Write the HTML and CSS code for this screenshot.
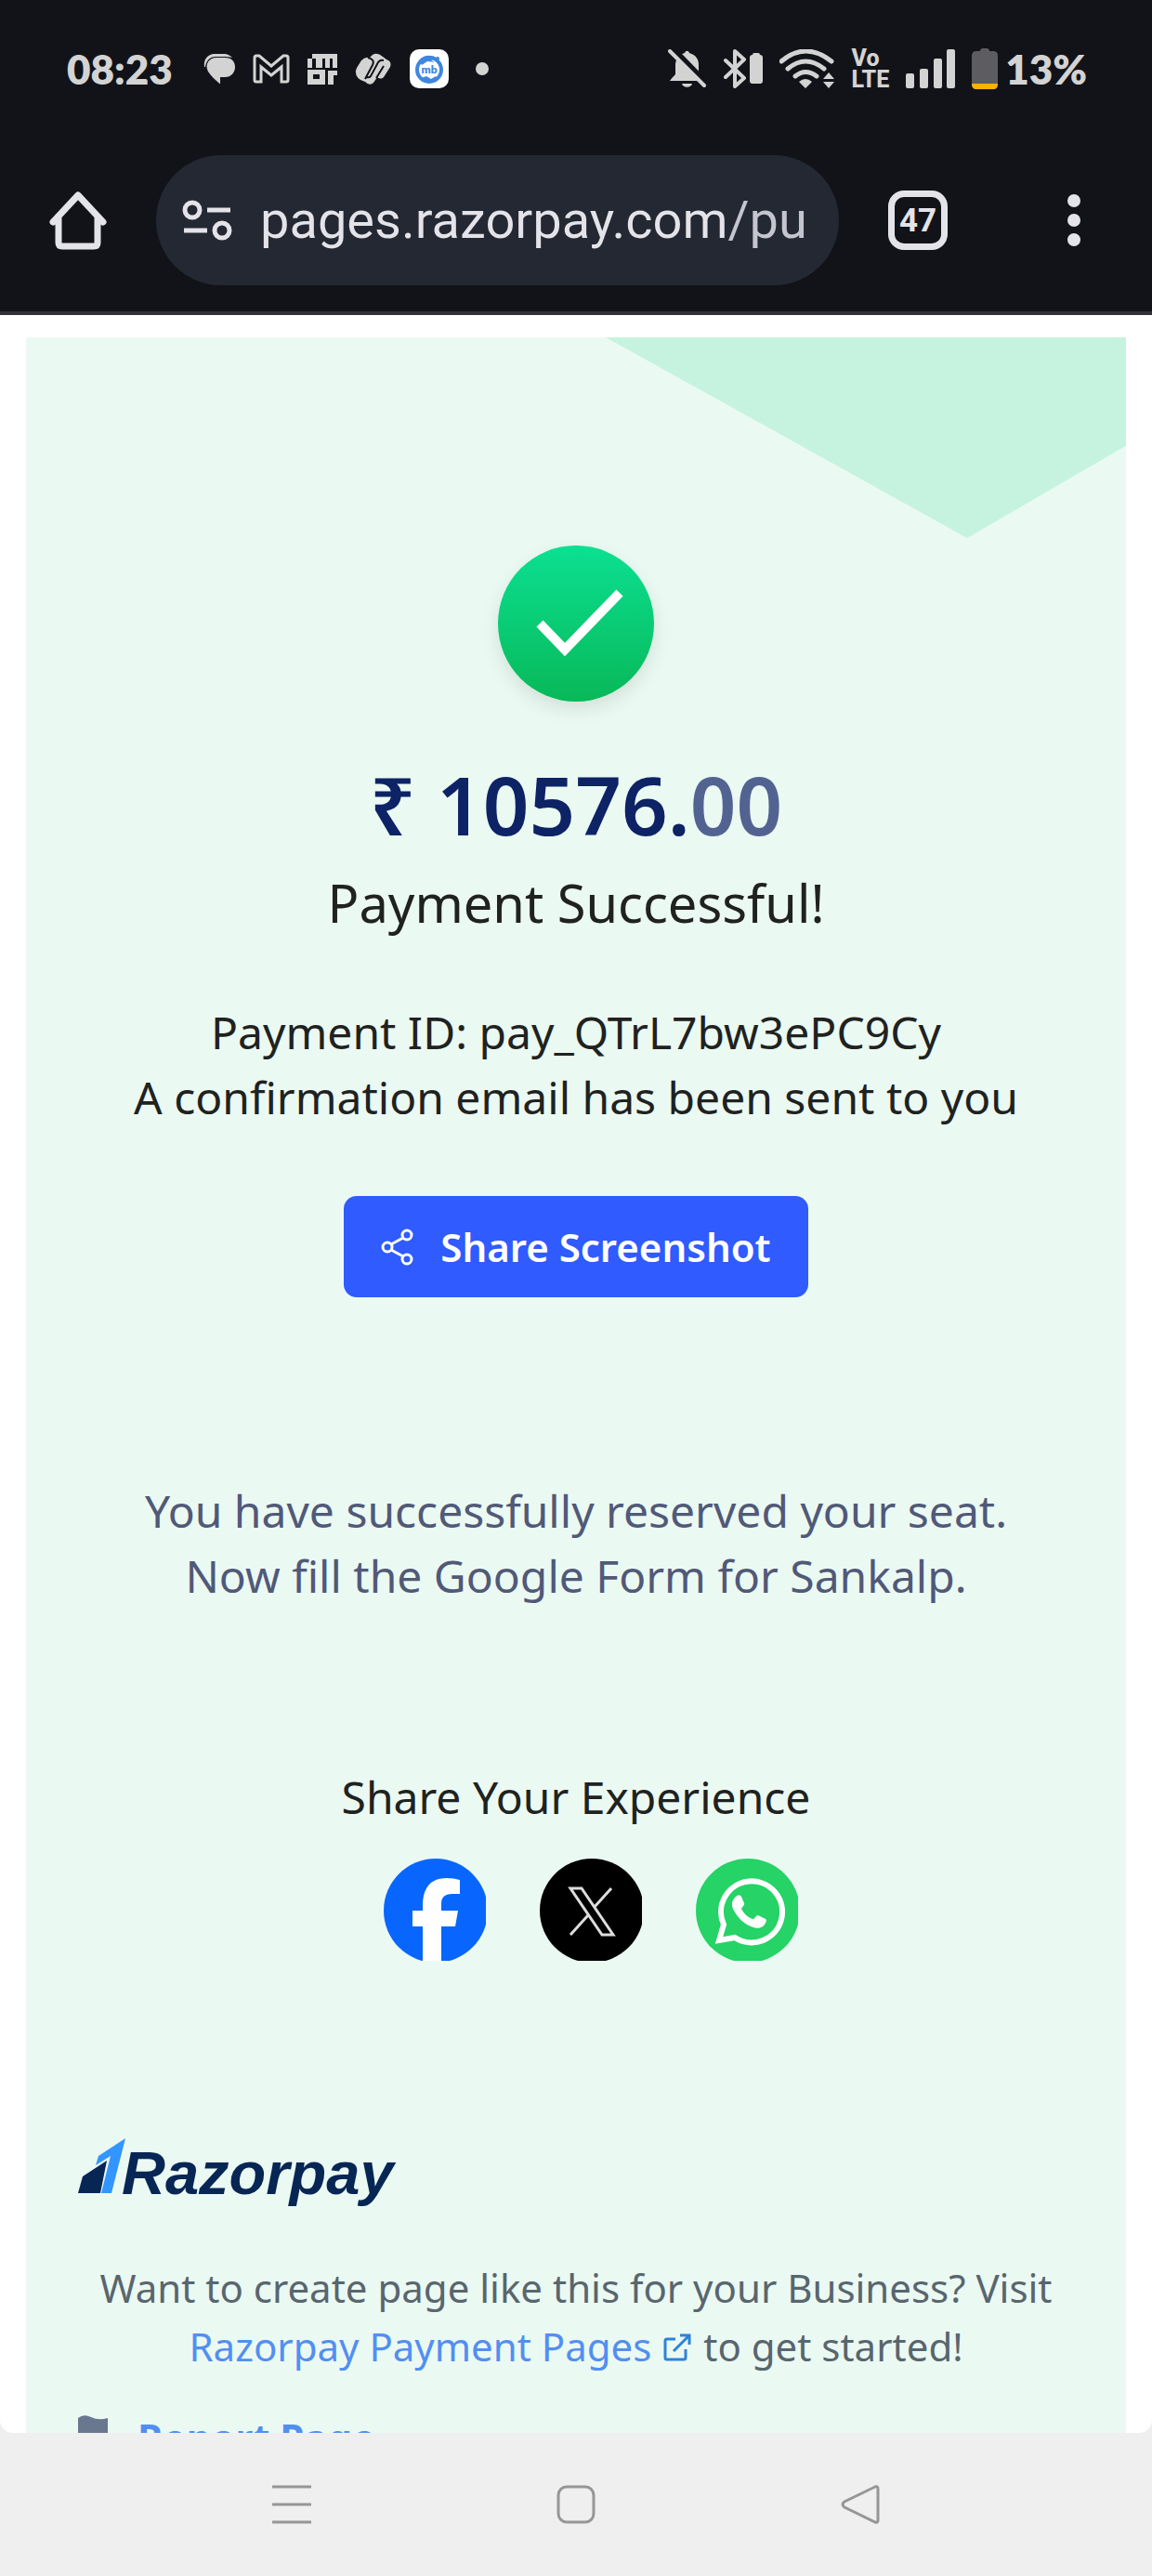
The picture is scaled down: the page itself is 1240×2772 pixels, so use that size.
FILE: index.html
```
<!DOCTYPE html>
<html lang="en">
<head>
    <meta charset="UTF-8">
    <meta name="viewport" content="width=device-width, initial-scale=1.0">
    <link rel="stylesheet" href="styles.css">
    <title>Payment Successful</title>
</head>
<body>
    <div class="status-bar">
        <div class="status-left">
            <span class="clock">08:23</span>
            <svg class="icon-chat" width="34" height="34" viewBox="0 0 34 34">
                <path d="M1 15C0 7 4 2 11 1h11c4 0 7 2 9 4-3-1-6-1-10-1h-8C7 4 3 8 2 15z"/>
                <path d="M14 5h9c7 0 11 4 11 10s-4 11-11 11h-5v7.500C13 29 8 25 5 20 1 12 6 5 14 5z"/>
            </svg>
            <svg class="icon-mail" width="40" height="32" viewBox="0 0 40 32">
                <path d="M2 4q0-2 2-2h3l13 11L33 2h3q2 0 2 2v24q0 2-2 2h-5V14L20 23 9 14v16H4q-2 0-2-2z"/>
            </svg>
            <svg width="32" height="34" viewBox="0 0 32 34">
                <path d="M5 1h27v15h-5V6h-3v10h-5V6h-3v10h-7V6H5zM0 6h5v10H0zM22 19h10v5h-4v10h-6z"/>
                <path d="M0 18h19v16H0zm6 5v5h7v-5z" fill-rule="evenodd"/>
            </svg>
            <svg width="40" height="34" viewBox="0 0 40 34">
                <path d="M2 16L7 8q4-4 9-3 6-8 14-1l4 3q6 2 4 8l-7 11q-3 3-7 0l-4 6q-4 4-9-1Q0 28 1 19z"/>
                <path class="wave" d="M14 5q8 2 5 8l-8 15M31 8q-5-1-7 4l-7 13q-2 2-4 1M31 14l-8 13"/>
            </svg>
            <svg class="icon-mb" width="42" height="42" viewBox="0 0 42 42">
                <rect width="42" height="42" rx="10" fill="#fff"/>
                <circle cx="21" cy="22" r="13" fill="none" stroke="#3f86df" stroke-width="4"/>
                <path d="M10 12c6-7 15-6 19-2l-6 2 4 2-8-1-6 4zM12 31l6-2 5 3 5-3 2 3c-6 6-14 5-18-1z" fill="#3f86df"/>
                <circle cx="30" cy="10" r="2" fill="#3f86df"/>
                <text x="21" y="26" text-anchor="middle">mb</text>
            </svg>
            <span class="dot"></span>
        </div>
        <div class="status-right">
            <svg width="42" height="42" viewBox="0 0 42 42">
                <path d="M2 34q2-3 6-7V16c1-8 6-11 10-12 1-3 4-3 5 0 7 2 10 7 10 12v8l5 8v2z"/>
                <path d="M15 37h11c-1 5-10 5-11 0z"/>
                <path d="M6 0l37 38" stroke="#121318" stroke-width="6"/>
                <path d="M2 2l37 37" stroke="#d3d3d3" stroke-width="4" stroke-linecap="round"/>
            </svg>
            <svg width="42" height="42" viewBox="0 0 42 42">
                <path d="M2 12l20 19-10 9V2l10 9L2 30" fill="none" stroke="#d3d3d3" stroke-width="4" stroke-linejoin="round" stroke-linecap="round"/>
                <path d="M31 6q0-2 2-2h4q2 0 2 2 3 0 3 3v25q0 3-3 3h-8q-3 0-3-3V9q0-3 3-3z"/>
            </svg>
            <svg width="60" height="42" viewBox="0 0 60 42">
                <path d="M2 13Q28-9 56 13M9 21Q28 5 48 21M17 29q11-9 23 0" fill="none" stroke="#d3d3d3" stroke-width="5" stroke-linecap="round"/>
                <path d="M28 42l-7-7q7-6 14 0zM53 25l6 7H47zM53 42l6-7H47z"/>
            </svg>
            <span class="volte">Vo<br>LTE</span>
            <svg width="53" height="42" viewBox="0 0 53 42">
                <rect x="0" y="26" width="9" height="16" rx="2"/>
                <rect x="15" y="21" width="9" height="21" rx="2"/>
                <rect x="30" y="10" width="9" height="32" rx="2"/>
                <rect x="44" y="0" width="9" height="42" rx="2"/>
            </svg>
            <span class="battery">
                <svg width="28" height="44" viewBox="0 0 28 44">
                    <path d="M9 3q0-3 3-3h4q3 0 3 3h4q5 0 5 5v31q0 5-5 5H5q-5 0-5-5V8q0-5 5-5z" fill="#5d5d61"/>
                    <path d="M0 38h28q0 6-5 6H5q-5 0-5-6z" fill="#ffb100"/>
                </svg>
                13%
            </span>
        </div>
    </div>

    <div class="toolbar">
        <a class="home" href="#" aria-label="Home">
            <svg width="62" height="64" viewBox="0 0 62 64">
                <path d="M4 34L31 5l27 29M10 30v26q0 4 4 4h34q4 0 4-4V30" fill="none" stroke="#e3e3e9" stroke-width="7" stroke-linecap="round" stroke-linejoin="round"/>
            </svg>
        </a>
        <div class="address">
            <svg width="54" height="44" viewBox="0 0 54 44">
                <g fill="none" stroke="#e3e3e9" stroke-width="5">
                    <circle cx="11" cy="11" r="8"/>
                    <circle cx="43" cy="33" r="8"/>
                    <path d="M27 11h25M2 33h25"/>
                </g>
            </svg>
            <input class="url" type="text" aria-label="Address" value="pages.razorpay.com/pu">
        </div>
        <button class="tabs" type="button">47</button>
        <button class="more" type="button" aria-label="More"><i></i><i></i><i></i></button>
    </div>

    <div class="viewport">
        <div class="card">
            <div class="corner"></div>
            <div class="check">
                <svg width="168" height="168" viewBox="0 0 168 168">
                    <path d="M45 84l27 28 59-61" fill="none" stroke="#fff" stroke-width="10"/>
                </svg>
            </div>
            <h1 class="amount">₹ 10576.<span>00</span></h1>
            <h2 class="success">Payment Successful!</h2>
            <p class="text">Payment ID: pay_QTrL7bw3ePC9Cy<br>A confirmation email has been sent to you</p>
            <button class="share-btn" type="button">
                <svg width="36" height="40" viewBox="0 0 36 40">
                    <g fill="none" stroke="#fff" stroke-width="3">
                        <circle cx="28" cy="7" r="5"/>
                        <circle cx="7" cy="20" r="5"/>
                        <circle cx="28" cy="33" r="5"/>
                        <path d="M11 17l13-7M11 23l13 7"/>
                    </g>
                </svg>
                Share Screenshot
            </button>
            <p class="text message">You have successfully reserved your seat.<br>Now fill the Google Form for Sankalp.</p>
            <p class="text experience">Share Your Experience</p>
            <div class="socials">
                <a href="#" aria-label="Facebook">
                    <svg width="110" height="110" viewBox="0 0 110 110">
                        <circle cx="56" cy="56" r="56" fill="#0866ff"/>
                        <path d="M42 112V73H31V56h11v-6c0-19 9-29 26-29q8 0 14 2v15H74c-9 0-12 4-12 11v7h18l-3 17H62v39z" fill="#fff"/>
                    </svg>
                </a>
                <a href="#" aria-label="X">
                    <svg width="110" height="110" viewBox="0 0 110 110">
                        <circle cx="56" cy="56" r="56" fill="#000"/>
                        <path d="M33 32h12l34 50H67zM77 32L58 53M52 61L33 82" fill="none" stroke="#ddd" stroke-width="3"/>
                    </svg>
                </a>
                <a href="#" aria-label="WhatsApp">
                    <svg width="110" height="110" viewBox="0 0 110 110">
                        <circle cx="56" cy="56" r="56" fill="#25d366"/>
                        <path d="M25 88l5-17A33 33 0 1 1 42 85z" fill="none" stroke="#fff" stroke-width="6"/>
                        <path d="M42 42c3-4 6-3 7-1l3 7c1 2-3 5-3 6 3 6 7 9 12 11 2 1 4-5 6-4l8 4c2 1 0 6-3 8-4 3-10 2-17-2-7-4-12-11-15-17-2-5-1-9 2-12z" fill="#fff"/>
                    </svg>
                </a>
            </div>

            <div class="footer">
                <div class="brand">
                    <svg width="51" height="60" viewBox="0 0 51 60">
                        <path d="M5 41l26-17-7 35H0z" fill="#072654"/>
                        <path d="M22 19L51 0 36 59H25l10-40-16 10z" fill="#3395ff"/>
                    </svg>
                    <span>Razorpay</span>
                </div>
                <p class="promo">Want to create page like this for your Business? Visit<br>
                    <a href="#">Razorpay Payment Pages
                    <svg width="30" height="30" viewBox="0 0 30 30">
                        <path d="M13 6H4q-2 0-2 2v18q0 2 2 2h18q2 0 2-2v-9M18 2h10v10M28 2L11 19" fill="none" stroke="#2b83dc" stroke-width="3"/>
                    </svg></a> to get started!</p>
                <a class="report" href="#">
                    <svg width="32" height="48" viewBox="0 0 32 48">
                        <path d="M0 3q6-5 14-1t18 1v25q-10 4-18 0t-10 0v20H0z" fill="#69788f"/>
                    </svg>
                    Report Page
                </a>
            </div>
        </div>
    </div>

    <div class="nav-bar">
        <button type="button" aria-label="Recent apps">
            <svg width="42" height="44" viewBox="0 0 42 44"><path d="M0 3h42M0 22h42M0 41h42"/></svg>
        </button>
        <button type="button" aria-label="Home screen">
            <svg width="42" height="44" viewBox="0 0 42 44"><rect x="2" y="3" width="38" height="38" rx="9"/></svg>
        </button>
        <button type="button" aria-label="Back">
            <svg width="42" height="44" viewBox="0 0 42 44"><path d="M37 3L4 19q-4 3 0 6l33 16q3 1 3-2V5q0-3-3-2z"/></svg>
        </button>
    </div>
</body>
</html>
```
FILE: styles.css
```
* {
    box-sizing: border-box;
}

body {
    display: flex;
    flex-direction: column;
    height: 100vh;
    margin: 0;
    background-color: #efefef;
    font-family: "Noto Sans", sans-serif;
    overflow: hidden;
}

h1, h2, p {
    margin: 0;
}

a {
    text-decoration: none;
}

button {
    padding: 0;
    border: none;
    background: none;
    font-family: inherit;
    cursor: pointer;
}

svg {
    display: block;
    flex-shrink: 0;
}

/* phone status bar */
.status-bar {
    display: flex;
    justify-content: space-between;
    align-items: center;
    height: 148px;
    padding: 0 70px 0 72px;
    background-color: #121318;
    color: #d3d3d3;
    fill: #d3d3d3;
    font-family: Lato, sans-serif;
    font-size: 44px;
    font-weight: 800;
}

.status-left,
.status-right {
    display: flex;
    align-items: center;
    gap: 18px;
}

.status-left {
    gap: 19px;
}

.clock {
    margin-right: 14px;
}

.icon-mail path {
    fill: none;
    stroke: #d3d3d3;
    stroke-width: 3;
}

.wave {
    fill: none;
    stroke: #121318;
    stroke-width: 2;
}

.icon-mb text {
    font-family: Lato, sans-serif;
    font-size: 12px;
    fill: #3f86df;
}

.dot {
    width: 14px;
    height: 14px;
    margin-left: 10px;
    border-radius: 50%;
    background-color: #d3d3d3;
}

.volte {
    font-family: Roboto, sans-serif;
    font-size: 25px;
    line-height: 23px;
}

.battery {
    display: flex;
    align-items: center;
    gap: 8px;
}

/* browser toolbar */
.toolbar {
    display: flex;
    align-items: center;
    padding: 19px 77px 28px 53px;
    border-bottom: 4px solid #313237;
    background-color: #121318;
}

.address {
    display: flex;
    flex: 1;
    align-items: center;
    gap: 30px;
    min-width: 0;
    height: 140px;
    margin: 0 53px;
    padding: 0 28px;
    border-radius: 70px;
    background-color: #242832;
}

/* host is brighter than the path */
.url {
    flex: 1;
    min-width: 0;
    padding: 0;
    border: none;
    outline: none;
    background: linear-gradient(90deg, #e3e3e9 500px, #c5c5d0 502px);
    background-clip: text;
    -webkit-background-clip: text;
    color: transparent;
    font-family: Roboto, sans-serif;
    font-size: 56px;
}

.tabs {
    width: 64px;
    height: 64px;
    border: 7px solid #e3e3e9;
    border-radius: 17px;
    color: #e3e3e9;
    font-family: Roboto, sans-serif;
    font-size: 35px;
    font-weight: bold;
}

.more {
    display: flex;
    flex-direction: column;
    gap: 7px;
    margin-left: 129px;
}

.more i {
    width: 14px;
    height: 14px;
    border-radius: 50%;
    background-color: #e3e3e9;
}

/* page */
.viewport {
    flex: 1;
    min-height: 0;
    padding: 24px 28px 0;
    border-radius: 0 0 14px 14px;
    background-color: white;
    overflow: hidden;
}

.card {
    position: relative;
    display: flex;
    flex-direction: column;
    align-items: center;
    padding: 224px 56px 60px;
    background-color: #ebf9f3;
    color: #202220;
    text-align: center;
}

.corner {
    position: absolute;
    top: 0;
    right: 0;
    width: 560px;
    height: 216px;
    background-color: #c6f3e0;
    clip-path: polygon(0 0, 100% 0, 100% 54%, 389px 100%);
}

.check {
    border-radius: 50%;
    background: linear-gradient(#0be092, #08b858);
    box-shadow: 0 8px 20px rgba(0, 0, 0, 0.1);
}

.amount {
    margin-top: 60px;
    color: #0d2366;
    font-size: 87px;
    font-weight: 600;
    line-height: 100px;
}

.amount span {
    color: #536391;
}

.success {
    margin-top: 21px;
    font-size: 56px;
    font-weight: normal;
    line-height: 70px;
}

.text {
    margin-top: 70px;
    font-size: 48px;
    line-height: 70px;
}

.share-btn {
    display: flex;
    align-items: center;
    gap: 28px;
    margin-top: 71px;
    padding: 24px 40px;
    border-radius: 14px;
    background-color: #2f5bff;
    color: white;
    font-size: 42px;
    font-weight: 600;
    line-height: 61px;
}

.message {
    margin-top: 195px;
    color: #515978;
}

.experience {
    margin-top: 168px;
}

.socials {
    display: flex;
    gap: 58px;
    margin-top: 31px;
    padding-left: 31px;
}

.footer {
    align-self: stretch;
    margin-top: 191px;
}

.brand {
    display: flex;
    align-items: flex-start;
    height: 74px;
    color: #072654;
    font-family: "Liberation Sans", Arial, sans-serif;
    font-size: 65px;
    font-style: italic;
    font-weight: bold;
    line-height: 76px;
}

.brand span {
    margin-left: -4px;
}

.promo {
    margin-top: 55px;
    color: #58666e;
    font-size: 42px;
    line-height: 63px;
}

.promo a {
    color: #528ff0;
}

.promo svg {
    display: inline-block;
    margin: 0 2px;
}

.report {
    display: flex;
    align-items: center;
    gap: 32px;
    margin-top: 35px;
    color: #528ff0;
    font-size: 42px;
    font-weight: bold;
    line-height: 63px;
}

/* system buttons */
.nav-bar {
    display: flex;
    height: 154px;
    padding: 0 13%;
    background-color: #efefef;
}

.nav-bar button {
    display: flex;
    flex: 1;
    align-items: center;
    justify-content: center;
}

.nav-bar svg {
    fill: none;
    stroke: #969696;
    stroke-width: 3;
}
```
